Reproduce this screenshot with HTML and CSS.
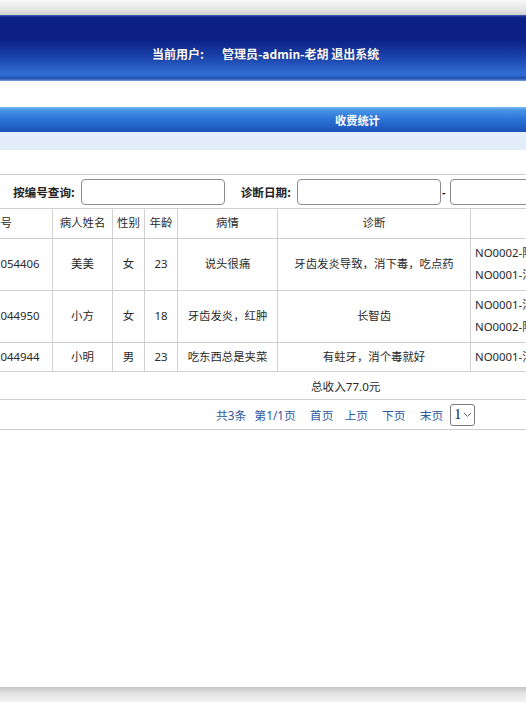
FILE: index.html
```html
<!DOCTYPE html>
<html lang="zh">
<head>
<meta charset="utf-8">
<title>收费统计</title>
<link rel="stylesheet" href="styles.css">
</head>
<body>
<div class="frame-top"></div>
<div class="page">
  <header class="topbar">
    <span class="user-label">当前用户:</span>
    <span class="user-name">管理员-admin-老胡 退出系统</span>
  </header>
  <div class="titlebar">收费统计</div>
  <div class="strip"></div>
  <div class="search">
    <label class="lbl">按编号查询:</label>
    <span class="inp"></span>
    <label class="lbl lbl-date">诊断日期:</label>
    <span class="inp"></span>
    <span class="dash">-</span>
    <span class="inp"></span>
  </div>
  <table class="grid">
    <colgroup>
      <col class="c1"><col class="c2"><col class="c3"><col class="c4"><col class="c5"><col class="c6"><col class="c7">
    </colgroup>
    <thead>
      <tr><th>编号</th><th>病人姓名</th><th>性别</th><th>年龄</th><th>病情</th><th>诊断</th><th>处方药品</th></tr>
    </thead>
    <tbody>
      <tr><td>155912054406</td><td>美美</td><td>女</td><td>23</td><td>说头很痛</td><td>牙齿发炎导致，消下毒，吃点药</td><td class="left">NO0002-阿莫西林<br>NO0001-消炎药</td></tr>
      <tr><td>155912044950</td><td>小方</td><td>女</td><td>18</td><td>牙齿发炎，红肿</td><td>长智齿</td><td class="left">NO0001-消炎药<br>NO0002-阿莫西林</td></tr>
      <tr><td>155912044944</td><td>小明</td><td>男</td><td>23</td><td>吃东西总是夹菜</td><td>有蛀牙，消个毒就好</td><td class="left">NO0001-消炎药</td></tr>
    </tbody>
  </table>
  <div class="total">总收入77.0元</div>
  <div class="pager">
    <span>共3条</span>
    <span class="m8">第1/1页</span>
    <span class="m14">首页</span>
    <span class="m11">上页</span>
    <span class="m14">下页</span>
    <span class="m14">末页</span>
    <span class="sel m7">1<svg width="9" height="6" viewBox="0 0 9 6"><path d="M1 1 L4.5 4.5 L8 1" fill="none" stroke="#666" stroke-width="1"/></svg></span>
  </div>
  <div class="fill"></div>
</div>
<div class="frame-bottom"></div>
</body>
</html>
```
FILE: styles.css
```css
html, body {
  margin: 0;
  padding: 0;
}
body {
  width: 526px;
  height: 702px;
  overflow: hidden;
  display: flex;
  flex-direction: column;
  background: #fff;
  font-family: "Noto Sans", "Noto Sans CJK SC", sans-serif;
  font-size: 11.2px;
  color: #2a2a2a;
}
.frame-top {
  height: 15px;
  flex: none;
  background: linear-gradient(#f7f7f7, #e6e6e6 60%, #cfcfcf);
}
.frame-bottom {
  height: 15px;
  flex: none;
  background: linear-gradient(#c4c4c4, #e2e2e2 40%, #f3f3f3);
}
.page {
  flex: 1;
  display: flex;
  flex-direction: column;
  background: #fff;
}
.topbar {
  height: 66px;
  flex: none;
  display: flex;
  align-items: center;
  padding-left: 152px;
  padding-top: 10px;
  box-sizing: border-box;
  color: #fff;
  font-family: "Noto Sans CJK SC", sans-serif;
  font-weight: bold;
  font-size: 12px;
  text-shadow: 0 0 1px rgba(0,0,40,0.6);
  background: linear-gradient(#4a66b2 0, #0c2188 2px, #0a1e86 24px, #1f4cb4 46px, #2f6cd2 58px, #2f6ad0 61px, #2252ae 62px, #2a5cb6 64px, #7ea3dc 66px);
}
.user-name {
  margin-left: 18px;
}
.titlebar {
  margin-top: 26px;
  height: 25px;
  flex: none;
  display: flex;
  align-items: center;
  padding-left: 335px;
  color: #fff;
  font-weight: bold;
  font-family: "Noto Sans CJK SC", sans-serif;
  background: linear-gradient(#7cbcf4 0, #4a94e6 3px, #2c74d6 12px, #1c52ba 25px);
}
.strip {
  height: 18px;
  flex: none;
  background: #e4eefa;
}
.search {
  margin-top: 24px;
  height: 34px;
  flex: none;
  box-sizing: border-box;
  border-top: 1px solid #cfcfcf;
  display: flex;
  align-items: center;
  padding-left: 13px;
  white-space: nowrap;
}
.lbl {
  font-weight: bold;
  color: #222;
  font-size: 11.6px;
  font-family: "Noto Sans CJK SC", sans-serif;
}
.lbl-date {
  margin-left: 16px;
}
.inp {
  flex: none;
  width: 144px;
  height: 26px;
  box-sizing: border-box;
  border: 1px solid #8c8c8c;
  border-radius: 4px;
  background: #fff;
  margin-left: 6px;
}
.dash {
  margin-left: 1px;
  margin-right: -2px;
  font-weight: bold;
  color: #222;
}
.grid {
  flex: none;
  margin-left: -52px;
  width: 796px;
  table-layout: fixed;
  border-collapse: collapse;
}
.c1 { width: 104px; }
.c2 { width: 60px; }
.c3 { width: 32px; }
.c4 { width: 33px; }
.c5 { width: 100px; }
.c6 { width: 193px; }
.c7 { width: 274px; }
.grid th, .grid td {
  border: 1px solid #d0d0d0;
  text-align: center;
  font-weight: normal;
  font-size: 11.4px;
  line-height: 22.5px;
  padding: 3px 0 3px;
  white-space: nowrap;
  overflow: hidden;
}
.grid th {
  padding: 3px 0 3px;
}
.grid td.left {
  text-align: left;
  padding-left: 4px;
}
.total {
  flex: none;
  height: 28px;
  box-sizing: border-box;
  border-bottom: 1px solid #cfcfcf;
  display: flex;
  align-items: center;
  padding-left: 311px;
  font-size: 11.6px;
}
.pager {
  flex: none;
  height: 30px;
  box-sizing: border-box;
  border-bottom: 1px solid #cfcfcf;
  display: flex;
  align-items: center;
  padding-left: 216px;
  color: #2f58a0;
  font-size: 11.8px;
  white-space: nowrap;
}
.m7 { margin-left: 7px; }
.m8 { margin-left: 8px; }
.m11 { margin-left: 11px; }
.m14 { margin-left: 14px; }
.sel {
  display: inline-flex;
  align-items: center;
  gap: 2px;
  box-sizing: border-box;
  width: 25px;
  height: 22px;
  padding-left: 3px;
  border: 1px solid #7a7a7a;
  border-radius: 3px;
  color: #111;
  font-family: "Liberation Serif", serif;
  font-size: 14px;
}
.fill {
  flex: 1;
}
```
